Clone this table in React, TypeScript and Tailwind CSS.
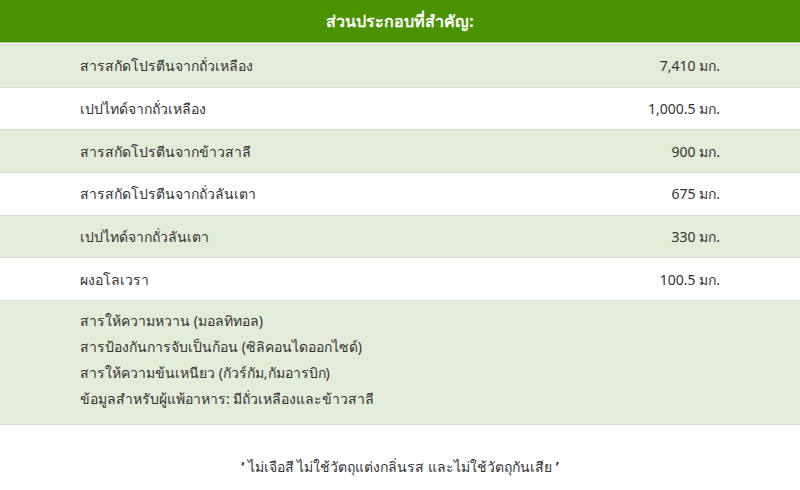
import React from 'react';

const rows = [
  { name: 'สารสกัดโปรตีนจากถั่วเหลือง', amount: '7,410 มก.' },
  { name: 'เปปไทด์จากถั่วเหลือง', amount: '1,000.5 มก.' },
  { name: 'สารสกัดโปรตีนจากข้าวสาลี', amount: '900 มก.' },
  { name: 'สารสกัดโปรตีนจากถั่วลันเตา', amount: '675 มก.' },
  { name: 'เปปไทด์จากถั่วลันเตา', amount: '330 มก.' },
  { name: 'ผงอโลเวรา', amount: '100.5 มก.' },
];

const notes = [
  'สารให้ความหวาน (มอลทิทอล)',
  'สารป้องกันการจับเป็นก้อน (ซิลิคอนไดออกไซด์)',
  'สารให้ความข้นเหนียว (กัวร์กัม,กัมอารบิก)',
  'ข้อมูลสำหรับผู้แพ้อาหาร: มีถั่วเหลืองและข้าวสาลี',
];

export default function App() {
  return (
    <div className="w-[800px] h-[490px] bg-white text-[#333] text-[14px] font-['Tahoma','Noto_Sans','Liberation_Sans',sans-serif] overflow-hidden">
      <div className="h-[42px] bg-[#4a9200] flex items-center justify-center text-white font-bold text-[16px]">
        ส่วนประกอบที่สำคัญ:
      </div>
      <div className="h-[1px] bg-[#a6cc7f]" />
      <div className="h-[1px] bg-white" />
      {rows.map((r, i) => (
        <div
          key={r.name}
          className={`h-[42.7px] flex items-center justify-between pl-[80px] pr-[80px] border-t border-[#dcdcdc] ${
            i % 2 === 0 ? 'bg-[#e3ecd9]' : 'bg-white'
          }`}
        >
          <span>{r.name}</span>
          <span>{r.amount}</span>
        </div>
      ))}
      <div className="h-[125px] bg-[#e3ecd9] border-t border-b border-[#dcdcdc] pl-[80px] pt-[7px] flex flex-col">
        {notes.map((n) => (
          <div key={n} className="h-[26px] leading-[26px]">
            {n}
          </div>
        ))}
      </div>
      <div className="pt-[31px] text-center">
        <span className="font-bold">‘</span> ไม่เจือสี ไม่ใช้วัตถุแต่งกลิ่นรส และไม่ใช้วัตถุกันเสีย{' '}
        <span className="font-bold">’</span>
      </div>
    </div>
  );
}
